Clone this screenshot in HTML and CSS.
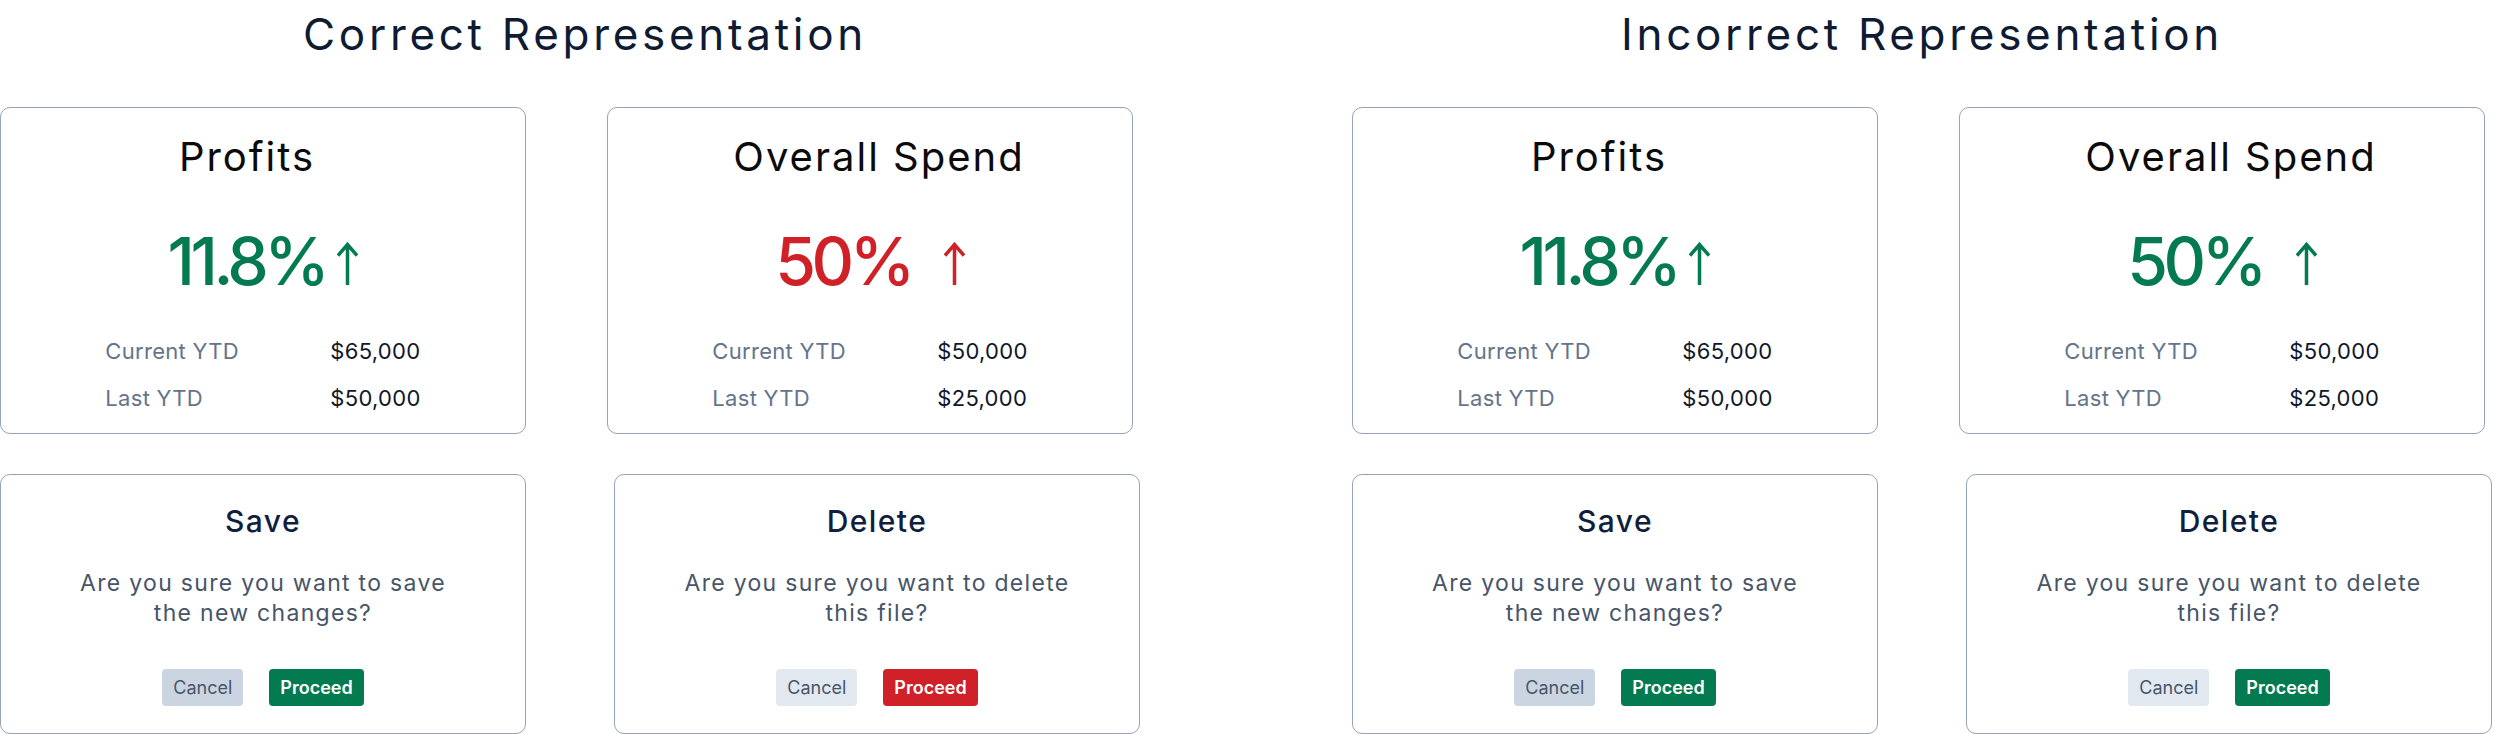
FILE: index.html
```html
<!DOCTYPE html>
<html lang="en">
<head>
<meta charset="utf-8">
<title>Correct vs Incorrect Representation</title>
<link rel="stylesheet" href="styles.css">
</head>
<body>
<main class="page">
  <section class="column">
    <h1 class="heading heading--offset">Correct Representation</h1>
    <div class="row row--stats">
      <article class="card stat-card">
        <h2 class="stat-title stat-title--left">Profits</h2>
        <div class="stat-value positive">11.8%<svg class="arrow" viewBox="0 0 21 43" width="21" height="43" aria-hidden="true"><path d="M10.5 43V3M1 13.5L10.5 2.5L20 13.5"/></svg></div>
        <dl class="stat-table">
          <dt>Current YTD</dt><dd>$65,000</dd>
          <dt>Last YTD</dt><dd>$50,000</dd>
        </dl>
      </article>
      <article class="card stat-card">
        <h2 class="stat-title stat-title--right">Overall Spend</h2>
        <div class="stat-value negative">50%<svg class="arrow arrow--spaced" viewBox="0 0 21 43" width="21" height="43" aria-hidden="true"><path d="M10.5 43V3M1 13.5L10.5 2.5L20 13.5"/></svg></div>
        <dl class="stat-table">
          <dt>Current YTD</dt><dd>$50,000</dd>
          <dt>Last YTD</dt><dd>$25,000</dd>
        </dl>
      </article>
    </div>
    <div class="row row--dialogs">
      <article class="card dialog-card">
        <h2 class="dialog-title">Save</h2>
        <p class="dialog-text">Are you sure you want to save the new changes?</p>
        <div class="dialog-actions">
          <button class="btn btn-cancel btn-cancel--strong">Cancel</button>
          <button class="btn btn-proceed btn-proceed--positive">Proceed</button>
        </div>
      </article>
      <article class="card dialog-card">
        <h2 class="dialog-title">Delete</h2>
        <p class="dialog-text">Are you sure you want to delete this file?</p>
        <div class="dialog-actions">
          <button class="btn btn-cancel">Cancel</button>
          <button class="btn btn-proceed btn-proceed--negative">Proceed</button>
        </div>
      </article>
    </div>
  </section>

  <section class="column">
    <h1 class="heading">Incorrect Representation</h1>
    <div class="row row--stats">
      <article class="card stat-card">
        <h2 class="stat-title stat-title--left">Profits</h2>
        <div class="stat-value positive">11.8%<svg class="arrow" viewBox="0 0 21 43" width="21" height="43" aria-hidden="true"><path d="M10.5 43V3M1 13.5L10.5 2.5L20 13.5"/></svg></div>
        <dl class="stat-table">
          <dt>Current YTD</dt><dd>$65,000</dd>
          <dt>Last YTD</dt><dd>$50,000</dd>
        </dl>
      </article>
      <article class="card stat-card">
        <h2 class="stat-title stat-title--right">Overall Spend</h2>
        <div class="stat-value positive">50%<svg class="arrow arrow--spaced" viewBox="0 0 21 43" width="21" height="43" aria-hidden="true"><path d="M10.5 43V3M1 13.5L10.5 2.5L20 13.5"/></svg></div>
        <dl class="stat-table">
          <dt>Current YTD</dt><dd>$50,000</dd>
          <dt>Last YTD</dt><dd>$25,000</dd>
        </dl>
      </article>
    </div>
    <div class="row row--dialogs">
      <article class="card dialog-card">
        <h2 class="dialog-title">Save</h2>
        <p class="dialog-text">Are you sure you want to save the new changes?</p>
        <div class="dialog-actions">
          <button class="btn btn-cancel btn-cancel--strong">Cancel</button>
          <button class="btn btn-proceed btn-proceed--positive">Proceed</button>
        </div>
      </article>
      <article class="card dialog-card">
        <h2 class="dialog-title">Delete</h2>
        <p class="dialog-text">Are you sure you want to delete this file?</p>
        <div class="dialog-actions">
          <button class="btn btn-cancel">Cancel</button>
          <button class="btn btn-proceed btn-proceed--positive">Proceed</button>
        </div>
      </article>
    </div>
  </section>
</main>
</body>
</html>
```

FILE: styles.css
```css
* {
  box-sizing: border-box;
}

html, body {
  margin: 0;
  padding: 0;
  background: #ffffff;
}

body {
  font-family: "Inter", "Noto Sans", sans-serif;
  color: #0f172a;
}

.page {
  display: grid;
  grid-template-columns: 1140px 1140px;
  column-gap: 212px;
}

.column {
  display: flex;
  flex-direction: column;
}

.heading {
  margin: 12px 0 0;
  font-size: 44px;
  line-height: 44px;
  font-weight: 400;
  letter-spacing: 3.7px;
  color: #0f1b33;
  text-align: center;
}

.heading--offset {
  padding-left: 30px;
}

.row {
  display: flex;
}

.row--stats {
  margin-top: 51px;
  gap: 81px;
}

.row--dialogs {
  margin-top: 40px;
  justify-content: space-between;
}

.card {
  width: 526px;
  border: 1px solid #94a3b8;
  border-radius: 10px;
  background: #ffffff;
  display: flex;
  flex-direction: column;
  align-items: center;
}

/* stat cards */
.stat-card {
  height: 327px;
  padding-top: 29px;
}

.stat-title {
  margin: 0;
  font-size: 40px;
  line-height: 40px;
  font-weight: 400;
  letter-spacing: 2px;
  color: #0b0b0b;
}

.stat-title--left {
  padding-right: 32px;
}

.stat-title--right {
  padding-left: 18px;
}

.stat-value {
  margin-top: 51px;
  font-size: 66px;
  line-height: 66px;
  font-weight: 500;
  letter-spacing: -4.5px;
  white-space: nowrap;
}

.positive {
  color: #047a50;
}

.negative {
  color: #d02028;
}

.arrow {
  margin-left: 12px;
  vertical-align: baseline;
  fill: none;
  stroke: currentColor;
  stroke-width: 3.5;
}

.arrow--spaced {
  margin-left: 33px;
}

.stat-table {
  margin: 34px 0 0;
  display: grid;
  grid-template-columns: 225px auto;
  font-size: 22px;
  line-height: 47px;
}

.stat-table dt {
  color: #64748b;
  letter-spacing: 0.3px;
}

.stat-table dd {
  margin: 0;
  color: #0f172a;
  letter-spacing: 0.3px;
}

/* dialog cards */
.dialog-card {
  height: 260px;
  padding-top: 31px;
}

.dialog-title {
  margin: 0;
  font-size: 30px;
  line-height: 30px;
  font-weight: 500;
  letter-spacing: 1.4px;
  color: #0f1f3d;
}

.dialog-text {
  margin: 32px 0 0;
  max-width: 398px;
  text-align: center;
  font-size: 23px;
  line-height: 30px;
  letter-spacing: 1.3px;
  color: #475569;
}

.dialog-actions {
  margin-top: 41px;
  display: flex;
  gap: 26px;
}

.btn {
  height: 37px;
  padding: 0 11px;
  border: 0;
  border-radius: 4px;
  font-family: inherit;
  font-size: 18px;
  line-height: 37px;
}

.btn-cancel {
  background: #e2e8f0;
  color: #475569;
  font-weight: 400;
}

.btn-cancel--strong {
  background: #cbd5e1;
}

.btn-proceed {
  color: #ffffff;
  font-weight: 600;
}

.btn-proceed--positive {
  background: #047a50;
}

.btn-proceed--negative {
  background: #d02028;
}
```
